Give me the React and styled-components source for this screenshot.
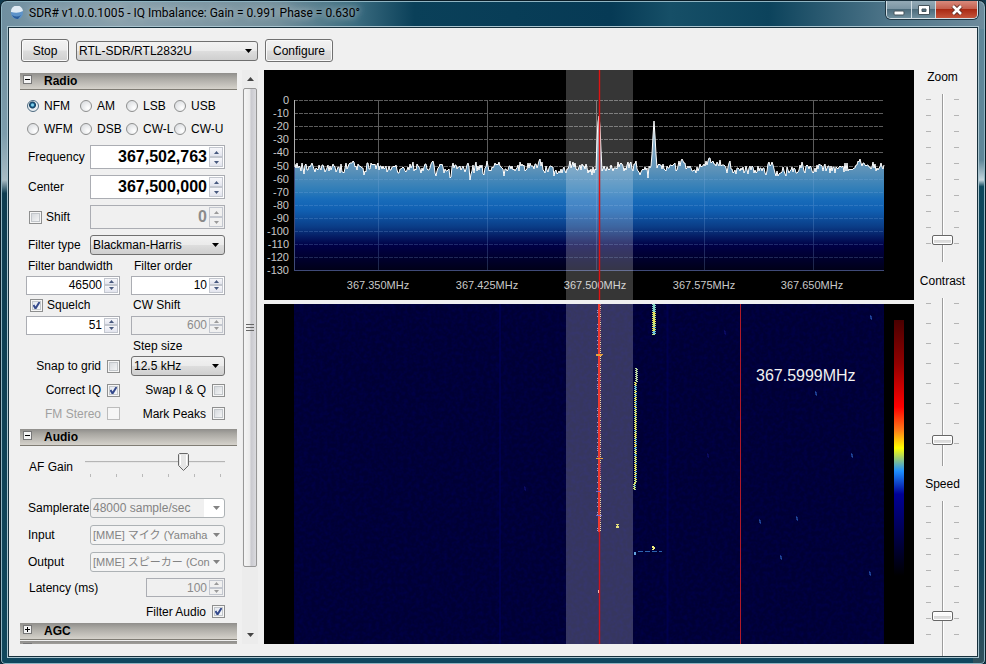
import React from 'react';
import styled, { createGlobalStyle, css } from 'styled-components';

const Global = createGlobalStyle`
  * { box-sizing: border-box; }
  body { margin: 0; background: #10394c; }
  body, button, input, select {
    font-family: "Liberation Sans", "Noto Sans CJK JP", sans-serif;
    font-size: 12px;
    color: #000;
  }
  button, input, select { margin: 0; padding: 0; }
`;

const ink = '#8e8f8f';

/* ---------- window frame ---------- */

const Frame = styled.div`
  display: flex;
  flex-direction: column;
  min-height: 100vh;
  padding: 0 7px 7px;
  border: 1px solid #0a1c26;
  border-radius: 7px 7px 5px 5px;
  box-shadow: inset 0 0 0 1px #8fb4c2;
  background:
    linear-gradient(to right, #6f8fa0, #8ba1ad 12%, #74909c 28%, #3b6c80 36%, #0a4059 42%, #063a55 62%, #164f67 68%, #0c435c 78%, #4d7488 90%, #6d8b9c) top / 100% 28px no-repeat,
    linear-gradient(#5f8799 0 24%, #c3d5dd 27%, #0d475c 28%, #12455b 85%, #31505c) right / 12px 100% no-repeat,
    linear-gradient(#6c8a99, #7d9dac 20%, #a9bcc4 27%, #0e3c50 29%, #10475c) left / 12px 100% no-repeat,
    #10465e;
`;

const TitleBar = styled.header`
  display: flex;
  align-items: flex-start;
  height: 26px;
  padding-left: 2px;
`;

const AppIcon = styled.svg`
  width: 14px;
  height: 14px;
  margin-top: 5px;
  flex: none;
`;

const Title = styled.h1`
  flex: 1;
  margin: 0 0 0 5px;
  font: 12px/25px Roboto, "Noto Sans", sans-serif;
  white-space: nowrap;
  text-shadow: 0 0 6px #b9c6cc, 0 0 10px #a5b6bf;
`;

const Captions = styled.div`
  display: flex;
  height: 18px;
  border: 1px solid #d3dee4;
  border-top: 0;
  border-radius: 0 0 5px 5px;
  overflow: hidden;
  box-shadow: 0 0 0 1px #1d3542;
`;

const CaptionButton = styled.button`
  display: grid;
  place-items: center;
  width: ${p => (p.$close ? 42 : 24)}px;
  border: 0;
  border-left: ${p => (p.$first ? 0 : '1px solid #cfdbe1')};
  background: ${p => (p.$close
    ? 'linear-gradient(#d98a7c, #c5604e 45%, #a92a14 50%, #c4543a)'
    : 'linear-gradient(#94aab6, #7c96a4 45%, #4d6c7c 50%, #6f8f9e)')};
`;

const Client = styled.main`
  flex: 1;
  display: flex;
  flex-direction: column;
  border: 1px solid #17303c;
  box-shadow: 0 0 0 1px #a9c4cf;
  background: #f0f0f0;
  overflow: hidden;
`;

/* ---------- controls ---------- */

const Toolbar = styled.div`
  display: flex;
  align-items: center;
  gap: 7px;
  height: 42px;
  padding: 3px 0 0 12px;
`;

const PushButton = styled.button`
  height: 23px;
  width: ${p => p.$width}px;
  border: 1px solid #707070;
  border-radius: 3px;
  box-shadow: inset 0 0 0 1px #fafafa;
  background: linear-gradient(#f2f2f2, #ebebeb 48%, #dddddd 52%, #cfcfcf);
`;

const SelectBox = styled.select`
  appearance: none;
  height: 20px;
  width: ${p => (p.$width ? `${p.$width}px` : '100%')};
  padding: 0 13px 0 2px;
  font-size: ${p => (p.$small ? 11 : 12)}px;
  border: 1px solid #707070;
  border-radius: 3px;
  opacity: 1;
  color: #000;
  background:
    url("data:image/svg+xml,%3Csvg xmlns='http://www.w3.org/2000/svg' width='7' height='4'%3E%3Cpath d='M0 0h7L3.500 4z' fill='%23000'/%3E%3C/svg%3E") right 5px center no-repeat,
    linear-gradient(#f2f2f2, #ebebeb 48%, #dddddd 52%, #cfcfcf);
  &:disabled {
    color: #838383;
    border-color: #adb2b5;
    background:
      url("data:image/svg+xml,%3Csvg xmlns='http://www.w3.org/2000/svg' width='7' height='4'%3E%3Cpath d='M0 0h7L3.500 4z' fill='%23838383'/%3E%3C/svg%3E") right 4px center no-repeat,
      ${p => (p.$editable ? 'linear-gradient(to right, #f0f0f0 85%, #fff 85%)' : '#f4f4f4')};
  }
`;

const SpinFrame = styled.div`
  display: flex;
  width: ${p => (p.$width ? `${p.$width}px` : '100%')};
  height: ${p => (p.$large ? 24 : 19)}px;
  padding: 1px;
  border: 1px solid #abadb3;
  background: ${p => (p.$disabled ? '#f0f0f0' : '#fff')};
`;

const SpinInput = styled.input`
  flex: 1;
  min-width: 0;
  border: 0;
  padding-right: 2px;
  background: transparent;
  text-align: right;
  font-size: ${p => (p.$large ? 16 : 12)}px;
  font-weight: ${p => (p.$large ? 700 : 400)};
  &:disabled { color: #8b8b8b; }
`;

const SpinButtons = styled.div`
  display: flex;
  flex-direction: column;
  width: 14px;
`;

const SpinButton = styled.button`
  flex: 1;
  display: grid;
  place-items: center;
  min-height: 0;
  border: 1px solid #c3c7cf;
  background: linear-gradient(#f7f7fa, #e2e4ee);
  color: #46587e;
  &:disabled { color: #9a9a9a; background: #f0f0f0; }
`;

function Spin({ id, value, large, disabled, width, label }) {
  return (
    <SpinFrame $large={large} $disabled={disabled} $width={width}>
      <SpinInput id={id} aria-label={label} defaultValue={value} $large={large} disabled={disabled} />
      <SpinButtons>
        <SpinButton aria-label="Increase" disabled={disabled}>
          <svg width="5" height="3"><path d="M0 3h5L2.500 0z" fill="currentColor" /></svg>
        </SpinButton>
        <SpinButton aria-label="Decrease" disabled={disabled}>
          <svg width="5" height="3"><path d="M0 0h5L2.500 3z" fill="currentColor" /></svg>
        </SpinButton>
      </SpinButtons>
    </SpinFrame>
  );
}

const boxBase = css`
  appearance: none;
  flex: none;
  border: 1px solid ${ink};
`;

const Check = styled.input.attrs({ type: 'checkbox' })`
  ${boxBase}
  width: 13px;
  height: 13px;
  box-shadow: inset 0 0 0 1px #f6f6f6, inset 0 0 0 2px #c3c7cb;
  background: linear-gradient(135deg, #cfd3d8, #fbfbfb);
  &:checked {
    background:
      url("data:image/svg+xml,%3Csvg xmlns='http://www.w3.org/2000/svg' width='11' height='11'%3E%3Cpath d='M2.500 5l2 3.500L8.500 2' fill='none' stroke='%23354a8c' stroke-width='2'/%3E%3C/svg%3E") center no-repeat,
      linear-gradient(135deg, #dde3ee, #fbfbfb);
  }
  &:disabled { border-color: #bcbcbc; box-shadow: none; background: #f6f6f6; }
`;

const RadioDot = styled.input.attrs({ type: 'radio' })`
  ${boxBase}
  width: 12px;
  height: 12px;
  border-radius: 50%;
  background: radial-gradient(circle at 70% 70%, #fff, #d3d6da);
  &:checked {
    border-color: #4d6a80;
    background: radial-gradient(circle at 45% 40%, #7fd0ec 0 1px, #1b5f8a 2px, #123f60 3px, #e8eef2 4px);
  }
`;

const Label = styled.label`
  display: flex;
  align-items: center;
  justify-content: ${p => (p.$end ? 'flex-end' : 'flex-start')};
  gap: ${p => p.$gap || 5}px;
  padding-left: ${p => p.$indent || 0}px;
  white-space: nowrap;
  color: ${p => (p.$off ? '#a0a0a0' : 'inherit')};
`;

/* ---------- side panel ---------- */

const Body = styled.div`
  flex: 1;
  display: grid;
  grid-template-columns: 217px 16px minmax(0, 1fr) 63px;
  padding-left: 11px;
`;

const Panel = styled.aside`
  height: 571px;
  margin-top: 3px;
  overflow: hidden;
`;

const SectionHead = styled.h2`
  display: flex;
  align-items: center;
  gap: 12px;
  height: 17px;
  margin: 0 0 1px;
  padding-left: 3px;
  border-bottom: 1px solid #7f7c74;
  background: linear-gradient(#8f8e8b, #a9a7a2 30%, #d5d2cb);
  font-size: 12px;
  font-weight: 700;
`;

const Toggle = styled.button`
  display: grid;
  place-items: center;
  width: 9px;
  height: 9px;
  margin-bottom: 4px;
  border: 1px solid #777;
  background: #f4f4f4;
`;

function Head({ title, open }) {
  return (
    <SectionHead>
      <Toggle aria-label={`Toggle ${title || 'section'}`}>
        <svg width="5" height="5"><path d={open ? 'M0 2.500h5' : 'M0 2.500h5M2.500 0v5'} stroke="#000" /></svg>
      </Toggle>
      {title}
    </SectionHead>
  );
}

const Modes = styled.div`
  display: grid;
  grid-template-columns: 53px 46px 48px 1fr;
  grid-auto-rows: 23px;
  padding: 3px 0 2px 7px;
`;

const FieldRow = styled.div`
  display: grid;
  grid-template-columns: 64px minmax(0, 1fr);
  align-items: center;
  height: ${p => p.$h}px;
  padding: 0 12px 0 6px;
`;

const PairRow = styled.div`
  display: grid;
  grid-template-columns: minmax(0, 1fr) minmax(0, 1fr);
  column-gap: 11px;
  align-items: center;
  height: ${p => p.$h}px;
  padding: 0 12px 0 6px;
`;

const EndRow = styled.div`
  display: flex;
  align-items: center;
  justify-content: ${p => (p.$spread ? 'space-between' : 'flex-end')};
  height: ${p => p.$h}px;
  padding: 0 12px 0 9px;
`;

const Gap = styled.div`
  height: ${p => p.$h}px;
`;

const GainWrap = styled.div`
  height: 40px;
  padding-top: 5px;
  margin-left: -5px;
  background: repeating-linear-gradient(to right, #b9b9b9 0 1px, transparent 1px 26px) 5px 27px / 131px 3px no-repeat;
`;

const Gain = styled.input.attrs({ type: 'range' })`
  appearance: none;
  display: block;
  width: 100%;
  height: 20px;
  background: linear-gradient(#9c9c9c, #fff) center / 100% 2px no-repeat;
  &::-webkit-slider-thumb {
    appearance: none;
    width: 11px;
    height: 18px;
    background: url("data:image/svg+xml,%3Csvg xmlns='http://www.w3.org/2000/svg' width='11' height='18'%3E%3Cpath d='M1.500 .5h8l1 1v11l-5 5-5-5v-11z' fill='%23e6e6e6' stroke='%23686868'/%3E%3Cpath d='M2.500 2v10M8.500 2v10' stroke='%23fff'/%3E%3C/svg%3E");
  }
`;

const ScrollTrack = styled.div`
  display: flex;
  flex-direction: column;
  width: 16px;
  height: 574px;
  margin-left: 5px;
  background: #ececec;
`;

const ScrollArrow = styled.button`
  display: grid;
  place-items: center;
  height: 18px;
  border: 0;
  background: transparent;
`;

const ScrollThumb = styled.div`
  display: flex;
  flex-direction: column;
  align-items: center;
  justify-content: center;
  height: 479px;
  margin: 0 1px;
  border: 1px solid #979797;
  border-radius: 2px;
  background: linear-gradient(to right, #f4f4f4, #ececec 45%, #c9c9cf 60%, #dadade);
`;

const Spacer = styled.div`
  flex: 1;
`;

/* ---------- signal displays ---------- */

const Displays = styled.section`
  display: flex;
  flex-direction: column;
  gap: 4px;
  margin: 0 0 11px 11px;
`;

const Scope = styled.svg`
  display: block;
  width: 100%;
  background: #000;
  font-family: "Liberation Sans", sans-serif;
`;

const LevelBars = styled.aside`
  display: flex;
  flex-direction: column;
  align-items: center;
  margin-right: 6px;
`;

const LevelLabel = styled.label`
  height: 14px;
  line-height: 14px;
  margin-bottom: ${p => p.$gap}px;
`;

const VSlider = styled.input.attrs({ type: 'range' })`
  appearance: none;
  writing-mode: vertical-lr;
  direction: rtl;
  width: 33px;
  height: ${p => p.$h}px;
  margin-bottom: ${p => p.$after}px;
  background:
    linear-gradient(to right, #9c9c9c 50%, #fff 50%) center / 2px 100% no-repeat,
    repeating-linear-gradient(transparent 0 ${p => p.$step - 1}px, #b5b5b5 ${p => p.$step - 1}px ${p => p.$step}px) left 0 top ${p => p.$shift}px / 5px 100% no-repeat,
    repeating-linear-gradient(transparent 0 ${p => p.$step - 1}px, #b5b5b5 ${p => p.$step - 1}px ${p => p.$step}px) right 0 top ${p => p.$shift}px / 5px 100% no-repeat;
  &::-webkit-slider-thumb {
    appearance: none;
    width: 21px;
    height: 10px;
    border: 1px solid #666;
    border-radius: 2px;
    background: linear-gradient(#fafafa 45%, #d6d6d6 50%, #e6e6e6);
    box-shadow: inset 0 0 0 1px #fff;
  }
`;

/* Repeatable noise source */
function makeRandom(seed) {
  let s = seed;
  return () => {
    s = (s * 1664525 + 1013904223) % 4294967296;
    return s / 4294967296;
  };
}

const PEAKS = {
  333: 70, 334: 52, 335: 46, 336: 56, 337: 80,
  388: 84, 389: 66, 390: 51, 391: 66, 392: 84,
};

function buildTrace() {
  const rnd = makeRandom(77);
  const pts = [];
  let drift = 0;
  for (let x = 30; x <= 620; x += 1) {
    drift = drift * 0.6 + (rnd() - 0.5) * 8;
    const dip = rnd() > 0.96 ? 6 : 0;
    const y = Math.round(97 + drift + (rnd() - 0.5) * 6 + dip);
    pts.push([x, PEAKS[x] || y]);
  }
  return pts.map(([x, y]) => `${x} ${y}`).join('L');
}

const TRACE = buildTrace();
const LEVELS = Array.from({ length: 14 }, (_, i) => i);
const FREQS = [[114, '367.350MHz'], [223, '367.425MHz'], [331, '367.500MHz'], [440, '367.575MHz'], [548, '367.650MHz']];

function Spectrum() {
  return (
    <Scope viewBox="0 0 650 230" role="img" aria-label="Spectrum">
      <defs>
        <linearGradient id="fill" gradientUnits="userSpaceOnUse" x1="0" y1="46" x2="0" y2="200">
          <stop offset="0" stopColor="#b4cbd6" />
          <stop offset=".34" stopColor="#5f93b8" />
          <stop offset=".48" stopColor="#2f7db8" />
          <stop offset=".54" stopColor="#186cba" />
          <stop offset=".61" stopColor="#1160b2" />
          <stop offset=".72" stopColor="#0a3c86" />
          <stop offset=".84" stopColor="#000046" />
          <stop offset="1" stopColor="#000018" />
        </linearGradient>
      </defs>
      <g stroke="#5c5c5c" strokeDasharray="4 1" shapeRendering="crispEdges">
        {LEVELS.slice(0, 13).map(i => {
          const y = Math.round(30 + i * 13.1);
          return <path key={i} d={`M30 ${y}.5H620`} />;
        })}
      </g>
      <g stroke="#5c5c5c" shapeRendering="crispEdges">
        {[114, 223, 332, 440, 549].map(x => <path key={x} d={`M${x}.5 30V200`} />)}
      </g>
      <path d={`M30 200L${TRACE}L620 200z`} fill="url(#fill)" />
      <g stroke="#8cb4e6" strokeOpacity=".22" shapeRendering="crispEdges">
        {LEVELS.slice(6, 13).map(i => {
          const y = Math.round(30 + i * 13.1);
          return <path key={i} d={`M30 ${y}.5H620`} strokeDasharray="4 1" />;
        })}
        {[114, 223, 332, 440, 549].map(x => <path key={x} d={`M${x}.5 98V200`} />)}
      </g>
      <path d={`M${TRACE}`} fill="none" stroke="#fff" />
      <path d="M30.500 30V97" stroke="#b0b0b0" />
      <path d="M30 200.500H620M30.500 97V200" stroke="#3f4a78" />
      <g fill="#c8c8c8" fontSize="11" textAnchor="end">
        {LEVELS.map(i => (
          <text key={i} x="25" y={Math.round(34 + i * 13.1)}>{i === 0 ? '0' : `-${i * 10}`}</text>
        ))}
      </g>
      <g fill="#c8c8c8" fontSize="11" textAnchor="middle">
        {FREQS.map(([x, t]) => <text key={t} x={x} y="219">{t}</text>)}
      </g>
      <rect x="302" width="67" height="230" fill="#fff" fillOpacity=".21" />
      <g shapeRendering="crispEdges">
        <rect x="334" width="3" height="230" fill="#c01010" fillOpacity=".25" />
        <rect x="335" width="1" height="230" fill="#dc1414" />
      </g>
    </Scope>
  );
}

function buildSignals() {
  const rnd = makeRandom(9);
  const cells = [];
  const hot = ['#e8e05a', '#b9e08c', '#6fc3d8', '#d6ea70'];
  for (let y = 0; y < 31; y += 1) {
    cells.push([388 + (y % 2 ? 1 : 0), y, 3, y < 8 ? '#86d6c4' : hot[Math.floor(rnd() * 4)]]);
  }
  for (let y = 64; y < 186; y += 1) {
    const lean = y < 78 ? 1 : y > 178 ? -1 : 0;
    cells.push([370 + lean + (y % 2), y, 2, y < 78 ? '#bcd8a0' : hot[Math.floor(rnd() * 4)]]);
  }
  for (let y = 0; y < 228; y += 2) {
    cells.push([336, y, 1, rnd() > 0.3 ? '#e8dcae' : '#b06a80']);
    if (rnd() > 0.55) cells.push([333, y, 1, '#9a9ad0']);
  }
  return cells;
}

const CELLS = buildSignals();
const SPECKS = [[551, 89], [587, 151], [532, 214], [495, 217], [516, 253], [605, 269], [606, 13], [443, 151], [460, 28], [260, 184]];

function Waterfall() {
  return (
    <Scope viewBox="0 0 650 340" role="img" aria-label="Waterfall">
      <defs>
        <linearGradient id="scale" x1="0" y1="0" x2="0" y2="1">
          <stop offset="0" stopColor="#4a0000" />
          <stop offset=".17" stopColor="#900000" />
          <stop offset=".34" stopColor="#ff0000" />
          <stop offset=".43" stopColor="#ff7a18" />
          <stop offset=".5" stopColor="#ffff00" />
          <stop offset=".59" stopColor="#1e90ff" />
          <stop offset=".68" stopColor="#000096" />
          <stop offset="1" stopColor="#000000" />
        </linearGradient>
        <filter id="grain" x="0" y="0" width="1" height="1">
          <feTurbulence type="fractalNoise" baseFrequency=".25" numOctaves="2" seed="4" />
          <feColorMatrix values="0 0 0 0 0  0 0 0 0 0  0 0 0 0 .4  .9 0 0 0 -.32" />
        </filter>
      </defs>
      <rect x="30" width="590" height="340" fill="#000035" />
      <rect x="30" width="590" height="340" filter="url(#grain)" opacity=".35" />
      <path d="M403.500 0V340M236 0V340" stroke="#00006a" strokeWidth="2" opacity=".4" />
      <rect x="302" width="67" height="340" fill="#fff" fillOpacity=".21" />
      <g shapeRendering="crispEdges">
        <rect x="334" width="3" height="340" fill="#c01010" fillOpacity=".25" />
        <rect x="335" width="1" height="340" fill="#cc1420" />
        <rect x="334" width="2" height="228" fill="#ee3b32" />
        {CELLS.map(([x, y, w, c], i) => <rect key={i} x={x} y={y} width={w} height="1" fill={c} />)}
        <path d="M332 50.500h7M332 51.500h6M332 154h7" stroke="#e8a23c" />
        <path d="M332 211.500h6M332 187h5" stroke="#7466c8" />
        <path d="M352 220h3v1h-1v1h1v2h-3v-2h1v-1h-1z" fill="#e6e27c" />
        <path d="M388 242h2v1h1v2h-1v1h-2v-1h1v-1h-1z" fill="#f1ee80" />
        <path d="M374 247.500h24" stroke="#2d64b0" strokeDasharray="5 2" />
        <path d="M370 248h2v3h-2z" fill="#64a4dc" />
        <path d="M334 286h1v3h-1z" fill="#f6b4a8" />
        <rect x="476" width="1" height="340" fill="#b01a28" />
      </g>
      {SPECKS.map(([x, y], i) => (
        <path key={x} d={`M${x} ${y - 1}h1v3h1`} fill="none" stroke={i < 7 ? '#2f66c8' : '#101078'} />
      ))}
      <text x="492" y="77" fontSize="16" fill="#f2f2f2">367.5999MHz</text>
      <rect x="630" y="16" width="10" height="256" fill="url(#scale)" />
    </Scope>
  );
}

const MODES = ['NFM', 'AM', 'LSB', 'USB', 'WFM', 'DSB', 'CW-L', 'CW-U'];

function RadioSection() {
  return (
    <>
      <Head title="Radio" open />
      <Modes>
        {MODES.map(m => (
          <Label key={m}><RadioDot name="mode" defaultChecked={m === 'NFM'} />{m}</Label>
        ))}
      </Modes>
      <FieldRow $h={30}><Label htmlFor="freq" $indent={2}>Frequency</Label><Spin id="freq" value="367,502,763" large /></FieldRow>
      <FieldRow $h={30}><Label htmlFor="center" $indent={2}>Center</Label><Spin id="center" value="367,500,000" large /></FieldRow>
      <FieldRow $h={30}><Label $gap={4} $indent={3}><Check />Shift</Label><Spin label="Shift amount" value="0" large disabled /></FieldRow>
      <FieldRow $h={25}>
        <Label htmlFor="ftype" $indent={2}>Filter type</Label>
        <SelectBox id="ftype"><option>Blackman-Harris</option></SelectBox>
      </FieldRow>
      <PairRow $h={18}><Label htmlFor="fbw" $indent={2}>Filter bandwidth</Label><Label htmlFor="ford" $indent={3}>Filter order</Label></PairRow>
      <PairRow $h={20}><Spin id="fbw" value="46500" /><Spin id="ford" value="10" /></PairRow>
      <PairRow $h={20}>
        <Label $gap={4} $indent={4}><Check defaultChecked />Squelch</Label>
        <Label htmlFor="cws" $indent={2}>CW Shift</Label>
      </PairRow>
      <PairRow $h={20}><Spin label="Squelch level" value="51" /><Spin id="cws" value="600" disabled /></PairRow>
      <PairRow $h={21}><span /><Label htmlFor="step" $indent={2}>Step size</Label></PairRow>
      <PairRow $h={20}>
        <Label $end $gap={6}>Snap to grid<Check /></Label>
        <SelectBox id="step"><option>12.5 kHz</option></SelectBox>
      </PairRow>
      <Gap $h={2} />
      <PairRow $h={24}><Label $end $gap={6}>Correct IQ<Check defaultChecked /></Label><Label $end $gap={6}>Swap I &amp; Q<Check /></Label></PairRow>
      <PairRow $h={23}><Label $end $off $gap={6}>FM Stereo<Check disabled /></Label><Label $end $gap={6}>Mark Peaks<Check /></Label></PairRow>
      <Gap $h={4} />
    </>
  );
}

function AudioSection() {
  return (
    <>
      <Head title="Audio" open />
      <FieldRow $h={40}>
        <Label htmlFor="gain" $indent={3}>AF Gain</Label>
        <GainWrap><Gain id="gain" min="0" max="100" defaultValue="72" /></GainWrap>
      </FieldRow>
      <Gap $h={7} />
      <FieldRow $h={27}><Label htmlFor="rate" $indent={2}>Samplerate</Label><SelectBox id="rate" disabled $editable><option>48000 sample/sec</option></SelectBox></FieldRow>
      <FieldRow $h={27}><Label htmlFor="in" $indent={2}>Input</Label><SelectBox id="in" disabled $small><option>[MME] マイク (Yamaha</option></SelectBox></FieldRow>
      <FieldRow $h={27}><Label htmlFor="out" $indent={2}>Output</Label><SelectBox id="out" disabled $small><option>[MME] スピーカー (Con</option></SelectBox></FieldRow>
      <EndRow $h={25} $spread><Label htmlFor="lat">Latency (ms)</Label><Spin id="lat" value="100" disabled width={79} /></EndRow>
      <EndRow $h={23}><Label $gap={6}>Filter Audio<Check defaultChecked /></Label></EndRow>
      <Head title="AGC" />
      <Head />
    </>
  );
}

export default function App() {
  return (
    <>
      <Global />
      <Frame>
        <TitleBar>
          <AppIcon viewBox="0 0 14 14">
            <circle cx="7" cy="7" r="6" fill="#5d93c9" />
            <path d="M1 6a6 6 0 0 1 12-1q-5 3-12 1" fill="#dfeaf3" />
            <path d="M2 9q5 3 9 0l-3 4q-4 0-6-4" fill="#2a5c9a" />
          </AppIcon>
          <Title>SDR# v1.0.0.1005 - IQ Imbalance: Gain = 0.991 Phase = 0.630°</Title>
          <Captions>
            <CaptionButton $first aria-label="Minimize">
              <svg width="12" height="12"><rect x="1" y="7" width="10" height="4" rx="1" fill="#fff" stroke="#46545c" /></svg>
            </CaptionButton>
            <CaptionButton aria-label="Maximize">
              <svg width="12" height="12"><path fillRule="evenodd" d="M.5 1.500h11v9H.5zM4 5v2.500h4V5z" fill="#fff" stroke="#46545c" /></svg>
            </CaptionButton>
            <CaptionButton $close aria-label="Close">
              <svg width="14" height="12"><path d="M3 2l8 8M11 2l-8 8" stroke="#5c2a22" strokeWidth="4.500" /><path d="M3 2l8 8M11 2l-8 8" stroke="#fff" strokeWidth="2.600" /></svg>
            </CaptionButton>
          </Captions>
        </TitleBar>
        <Client>
          <Toolbar>
            <PushButton $width={48}>Stop</PushButton>
            <SelectBox aria-label="Source" $width={182}><option>RTL-SDR/RTL2832U</option></SelectBox>
            <PushButton $width={68}>Configure</PushButton>
          </Toolbar>
          <Body>
            <Panel>
              <RadioSection />
              <AudioSection />
            </Panel>
            <ScrollTrack>
              <ScrollArrow aria-label="Scroll up"><svg width="7" height="4"><path d="M0 4h7L3.500 0z" fill="#444" /></svg></ScrollArrow>
              <ScrollThumb><svg width="8" height="8"><path d="M0 .5h8M0 3.500h8M0 6.500h8" stroke="#666" /></svg></ScrollThumb>
              <Spacer />
              <ScrollArrow aria-label="Scroll down"><svg width="7" height="4"><path d="M0 0h7L3.500 4z" fill="#444" /></svg></ScrollArrow>
            </ScrollTrack>
            <Displays>
              <Spectrum />
              <Waterfall />
            </Displays>
            <LevelBars>
              <LevelLabel htmlFor="zoom" $gap={10}>Zoom</LevelLabel>
              <VSlider id="zoom" $h={168} $after={12} $step={16} $shift={-10} min="0" max="100" defaultValue="11" />
              <LevelLabel htmlFor="contrast" $gap={10}>Contrast</LevelLabel>
              <VSlider id="contrast" $h={168} $after={11} $step={20} $shift={-14} min="0" max="100" defaultValue="13" />
              <LevelLabel htmlFor="speed" $gap={10}>Speed</LevelLabel>
              <VSlider id="speed" $h={155} $after={0} $step={16} $shift={-10} min="0" max="100" defaultValue="24" />
            </LevelBars>
          </Body>
        </Client>
      </Frame>
    </>
  );
}
